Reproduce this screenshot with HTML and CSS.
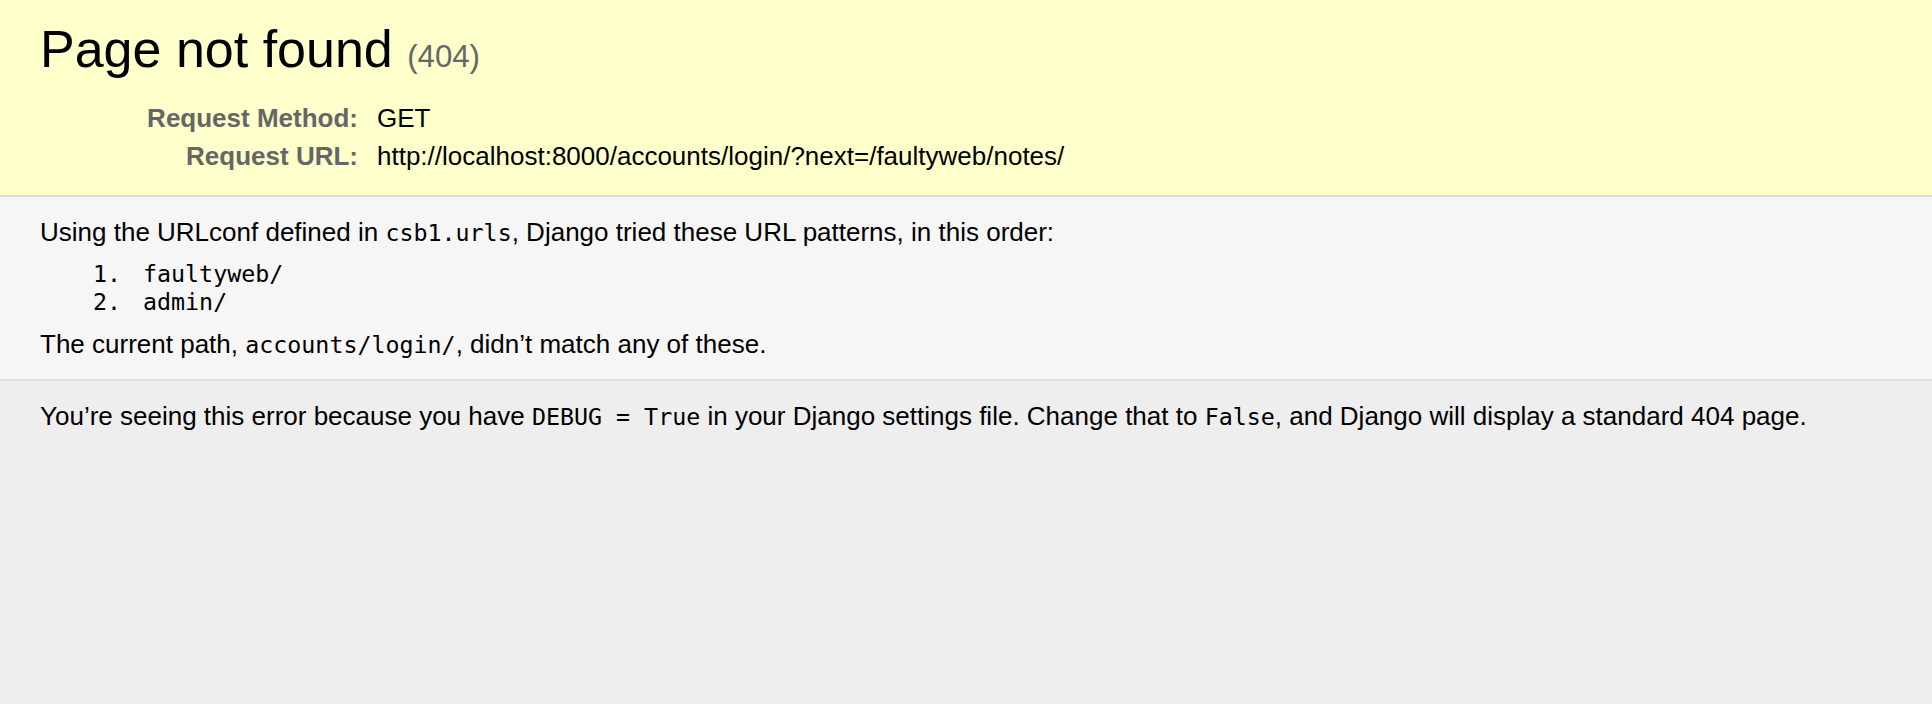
FILE: index.html
```html
<!DOCTYPE html>
<html lang="en">
<head>
<meta charset="utf-8">
<title>Page not found at /accounts/login/</title>
<link rel="stylesheet" href="styles.css">
</head>
<body>
<div class="summary">
  <h1 class="title">Page not found <span class="code">(404)</span></h1>
  <table class="meta">
    <tr><th class="label">Request Method:</th><td class="value">GET</td></tr>
    <tr><th class="label">Request URL:</th><td class="value">http://localhost:8000/accounts/login/?next=/faultyweb/notes/</td></tr>
  </table>
</div>
<div class="info">
  <p class="para">Using the URLconf defined in <code class="mono">csb1.urls</code>, Django tried these URL patterns, in this order:</p>
  <ol class="patterns">
    <li class="pattern">faultyweb/</li>
    <li class="pattern">admin/</li>
  </ol>
  <p class="para">The current path, <code class="mono">accounts/login/</code>, didn’t match any of these.</p>
</div>
<div class="explanation">
  <p class="para">You’re seeing this error because you have <code class="mono">DEBUG = True</code> in your Django settings file. Change that to <code class="mono">False</code>, and Django will display a standard 404 page.</p>
</div>
</body>
</html>
```
FILE: styles.css
```css
html, body, div, h1, p, table, th, td, ol, li, code {
  margin: 0;
  padding: 0;
}
html {
  background: #eee;
}
body {
  font-family: "Liberation Sans", Arial, sans-serif;
  font-size: 26px;
  line-height: 30px;
  color: #000;
  background: #eee;
}
.summary {
  background: #ffc;
  padding: 20px 40px;
  border-bottom: 2px solid #ddd;
}
.title {
  font-size: 52px;
  line-height: 58px;
  font-weight: normal;
  margin-bottom: 0.4em;
}
.code {
  font-size: 60%;
  line-height: 1;
  color: #666;
}
.meta {
  border: none;
  border-collapse: collapse;
  width: 100%;
}
.label, .value {
  vertical-align: top;
  padding: 4px 6px;
}
.label {
  width: 12em;
  text-align: right;
  color: #666;
  padding-right: 0.5em;
  font-weight: bold;
}
.info {
  background: #f6f6f6;
  padding: 20px 40px;
  border-bottom: 2px solid #ddd;
}
.patterns {
  margin: 13px 104px;
  list-style: none;
}
.pattern {
  font-family: "DejaVu Sans Mono", monospace;
  font-size: 23.3px;
  line-height: 28px;
}
.pattern::before {
  content: counter(list-item) ".";
  display: inline-block;
  width: 50px;
  margin-left: -51px;
}
.mono {
  font-family: "DejaVu Sans Mono", monospace;
  font-size: 23.3px;
  line-height: 1;
}
.explanation {
  background: #eee;
  padding: 20px 40px;
}
```
